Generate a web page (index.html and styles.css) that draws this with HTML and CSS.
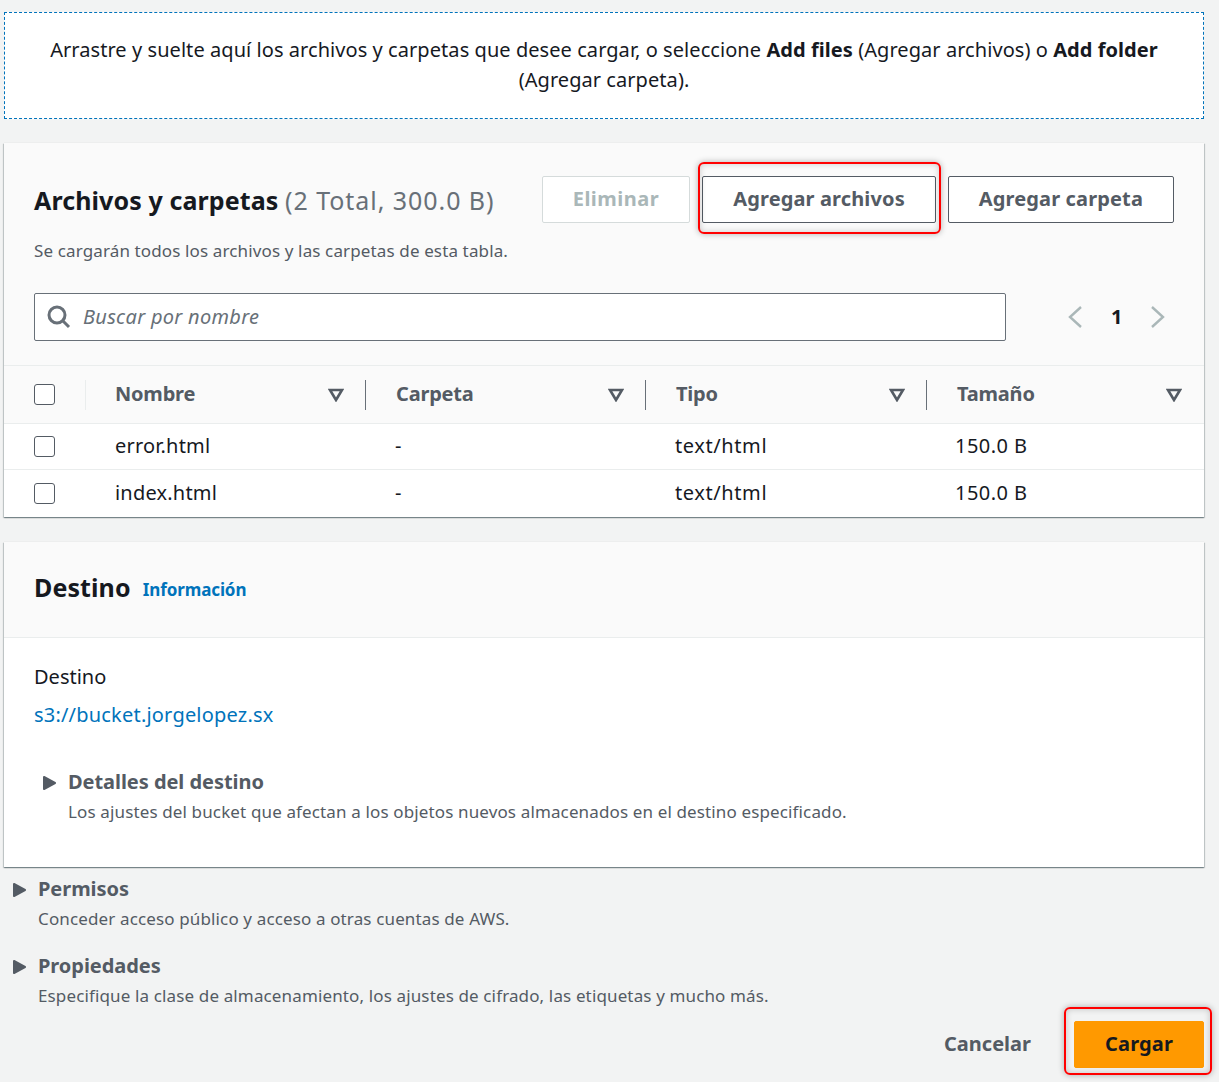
FILE: index.html
```html
<!DOCTYPE html>
<html lang="es">
<head>
    <meta charset="UTF-8">
    <title>Cargar</title>
    <link rel="stylesheet" href="styles.css">
</head>
<body>
    <div class="dropzone">
        Arrastre y suelte aquí los archivos y carpetas que desee cargar, o seleccione <b>Add files</b> (Agregar archivos) o <b>Add folder</b> (Agregar carpeta).
    </div>

    <section class="card files-card">
        <div class="files-head">
            <div class="title-row">
                <h2>Archivos y carpetas <span class="count">(2 Total, 300.0 B)</span></h2>
                <div class="actions">
                    <button class="btn disabled">Eliminar</button>
                    <span class="marked"><button class="btn">Agregar archivos</button></span>
                    <button class="btn">Agregar carpeta</button>
                </div>
            </div>
            <p class="desc">Se cargarán todos los archivos y las carpetas de esta tabla.</p>
            <div class="search-row">
                <div class="search">
                    <svg class="search-icon" width="24" height="24" viewBox="0 0 24 24"><circle cx="10" cy="10" r="8"/><path d="M15.5 15.5l6.5 6.5"/></svg>
                    <span>Buscar por nombre</span>
                </div>
                <div class="pager">
                    <svg width="16" height="24" viewBox="0 0 16 24"><path d="M14 2L3 12l11 10"/></svg>
                    <span>1</span>
                    <svg width="16" height="24" viewBox="0 0 16 24"><path d="M2 2l11 10L2 22"/></svg>
                </div>
            </div>
        </div>

        <div class="row head-row">
            <div class="cell check-cell"><i class="check"></i></div>
            <div class="cell"><span>Nombre</span><svg class="sort" width="16" height="14" viewBox="0 0 16 14"><path d="M2 2h12L8 12z"/></svg></div>
            <div class="cell"><span>Carpeta</span><svg class="sort" width="16" height="14" viewBox="0 0 16 14"><path d="M2 2h12L8 12z"/></svg></div>
            <div class="cell"><span>Tipo</span><svg class="sort" width="16" height="14" viewBox="0 0 16 14"><path d="M2 2h12L8 12z"/></svg></div>
            <div class="cell"><span>Tamaño</span><svg class="sort" width="16" height="14" viewBox="0 0 16 14"><path d="M2 2h12L8 12z"/></svg></div>
        </div>
        <div class="row body-row">
            <div class="cell check-cell"><i class="check"></i></div>
            <div class="cell">error.html</div>
            <div class="cell">-</div>
            <div class="cell wide">text/html</div>
            <div class="cell size">150.0 B</div>
        </div>
        <div class="row body-row last">
            <div class="cell check-cell"><i class="check"></i></div>
            <div class="cell">index.html</div>
            <div class="cell">-</div>
            <div class="cell wide">text/html</div>
            <div class="cell size">150.0 B</div>
        </div>
    </section>

    <section class="card dest-card">
        <div class="dest-head">
            <h2>Destino</h2>
            <a class="info">Información</a>
        </div>
        <div class="dest-body">
            <div class="dest-label">Destino</div>
            <a class="dest-link">s3://bucket.jorgelopez.sx</a>
            <div class="expander inner">
                <svg class="caret" width="13" height="14" viewBox="0 0 13 14"><path d="M1 1L12 7 1 13z"/></svg>
                <div>
                    <h3>Detalles del destino</h3>
                    <p>Los ajustes del bucket que afectan a los objetos nuevos almacenados en el destino especificado.</p>
                </div>
            </div>
        </div>
    </section>

    <div class="expander outer first">
        <svg class="caret" width="13" height="14" viewBox="0 0 13 14"><path d="M1 1L12 7 1 13z"/></svg>
        <div>
            <h3>Permisos</h3>
            <p>Conceder acceso público y acceso a otras cuentas de AWS.</p>
        </div>
    </div>
    <div class="expander outer">
        <svg class="caret" width="13" height="14" viewBox="0 0 13 14"><path d="M1 1L12 7 1 13z"/></svg>
        <div>
            <h3>Propiedades</h3>
            <p>Especifique la clase de almacenamiento, los ajustes de cifrado, las etiquetas y mucho más.</p>
        </div>
    </div>

    <div class="footer">
        <a class="cancel">Cancelar</a>
        <span class="marked big"><button class="btn primary">Cargar</button></span>
    </div>
</body>
</html>
```

FILE: styles.css
```css
* {
    box-sizing: border-box;
}

html, body {
    height: 1082px;
    overflow: hidden;
}

body {
    margin: 0;
    padding: 12px 15px 0 4px;
    background-color: #f2f3f3;
    color: #16191f;
    font-family: "Noto Sans", Arial, sans-serif;
    font-size: 20px;
    line-height: 30px;
}

h2, h3, p {
    margin: 0;
}

.dropzone {
    height: 107px;
    padding: 22px 40px 0;
    border: 1px dashed #0073bb;
    background-color: #fff;
    text-align: center;
    letter-spacing: 0.06px;
}

.card {
    background-color: #fff;
    box-shadow: 0 1px 1px 0 rgba(0, 28, 36, 0.3), 1px 1px 1px 0 rgba(0, 28, 36, 0.15), -1px 1px 1px 0 rgba(0, 28, 36, 0.15), 0 0 1px rgba(0, 28, 36, 0.12);
}

.files-card {
    margin-top: 24px;
    height: 374px;
}

.files-head {
    height: 222px;
    padding: 33px 30px 0;
    background-color: #fafafa;
}

.title-row {
    display: flex;
    justify-content: space-between;
    align-items: center;
    height: 47px;
}

h2 {
    font-size: 25px;
    font-weight: 700;
    line-height: 36px;
    letter-spacing: 0.1px;
}

.count {
    color: #687078;
    font-weight: 400;
    letter-spacing: 0.95px;
}

.actions {
    display: flex;
    gap: 12px;
}

.btn {
    height: 47px;
    padding: 0 30px 2px;
    border: 1px solid #545b64;
    border-radius: 2px;
    background-color: #fff;
    color: #545b64;
    font-family: inherit;
    font-size: 20px;
    font-weight: 700;
    letter-spacing: 0.13px;
}

.btn.disabled {
    border-color: #d5dbdb;
    color: #aab7b8;
    letter-spacing: 0.5px;
}

.btn.primary {
    width: 130px;
    padding: 0 0 2px;
    border-color: #ff9900;
    background-color: #ff9900;
    color: #16191f;
}

.marked {
    position: relative;
    display: flex;
}

.marked::after {
    content: "";
    position: absolute;
    top: -14px;
    right: -5px;
    bottom: -11px;
    left: -4px;
    border: 2px solid #ff0000;
    border-radius: 6px;
    box-shadow: 0 0 6px rgba(0, 0, 0, 0.3), inset 0 0 6px rgba(0, 0, 0, 0.2);
}

.marked.big::after {
    right: -8px;
    bottom: -7px;
    left: -10px;
}

.desc {
    margin-top: 13px;
    color: #545b64;
    font-size: 17px;
    line-height: 30px;
    letter-spacing: 0.13px;
}

.search-row {
    display: flex;
    align-items: center;
    margin-top: 27px;
}

.search {
    display: flex;
    align-items: center;
    gap: 12px;
    width: 972px;
    height: 48px;
    padding-left: 12px;
    border: 1px solid #687078;
    border-radius: 2px;
    background-color: #fff;
    color: #687078;
    font-style: italic;
    letter-spacing: 0.3px;
}

.search-icon {
    fill: none;
    stroke: #687078;
    stroke-width: 3;
}

.pager {
    display: flex;
    align-items: center;
    gap: 28px;
    margin-left: 61px;
    font-weight: 700;
}

.pager svg {
    fill: none;
    stroke: #aab7b8;
    stroke-width: 2.4;
}

.row {
    display: grid;
    grid-template-columns: 81px 280px 280px 281px 1fr;
    align-items: center;
    border-top: 1px solid #eaeded;
}

.head-row {
    height: 58px;
    background-color: #fafafa;
    color: #545b64;
    font-weight: 700;
    letter-spacing: -0.2px;
}

.body-row {
    height: 46px;
    background-color: #fff;
    letter-spacing: 0.2px;
}

.body-row.last {
    height: 48px;
}

.cell {
    padding-left: 30px;
    padding-bottom: 2px;
}

.cell.wide {
    letter-spacing: 0.6px;
}

.cell.size {
    padding-left: 29px;
    letter-spacing: 0.45px;
}

.check-cell {
    height: 100%;
    display: flex;
    align-items: center;
    padding-bottom: 0;
}

.head-row .cell {
    display: flex;
    justify-content: space-between;
    align-items: center;
    height: 30px;
    padding-right: 21px;
    padding-bottom: 0;
    border-left: 1px solid #687078;
}

.head-row .cell span {
    padding-bottom: 2px;
}

.head-row .check-cell {
    border-left: 0;
    padding-right: 0;
}

.head-row .cell:nth-child(2) {
    padding-left: 29px;
    border-left-color: #eaeded;
}

.head-row .cell:last-child {
    padding-right: 22px;
}

.sort {
    fill: none;
    stroke: #545b64;
    stroke-width: 2.6;
}

.check {
    display: block;
    width: 21px;
    height: 21px;
    border: 1px solid #545b64;
    border-radius: 3px;
    background-color: #fff;
}

.dest-card {
    margin-top: 25px;
    height: 325px;
}

.dest-head {
    display: flex;
    align-items: center;
    gap: 12px;
    height: 96px;
    padding: 0 30px 6px;
    border-bottom: 1px solid #eaeded;
    background-color: #fafafa;
}

.info, .dest-link {
    color: #0073bb;
}

.info {
    margin-top: 6px;
    font-size: 17px;
    font-weight: 700;
    letter-spacing: -0.1px;
}

.dest-body {
    padding: 24px 30px 0;
}

.dest-link {
    display: block;
    margin-top: 8px;
    letter-spacing: 0.2px;
}

.expander {
    display: flex;
    color: #545b64;
}

.expander h3 {
    font-size: 20px;
    line-height: 30px;
    font-weight: 700;
    letter-spacing: -0.05px;
}

.expander p {
    font-size: 17px;
    line-height: 30px;
    color: #545b64;
    letter-spacing: 0.135px;
}

.caret {
    flex: none;
    margin: 9px 12px 0 0;
    fill: #545b64;
    stroke: #545b64;
    stroke-width: 2;
    stroke-linejoin: round;
}

.expander.inner {
    margin: 37px 0 0 9px;
}

.expander.outer {
    margin: 17px 0 0 9px;
}

.expander.first {
    margin-top: 7px;
}

.footer {
    display: flex;
    justify-content: flex-end;
    align-items: center;
    gap: 43px;
    margin-top: 10px;
    height: 47px;
}

.cancel {
    color: #545b64;
    font-weight: 700;
    padding-bottom: 2px;
}
```
